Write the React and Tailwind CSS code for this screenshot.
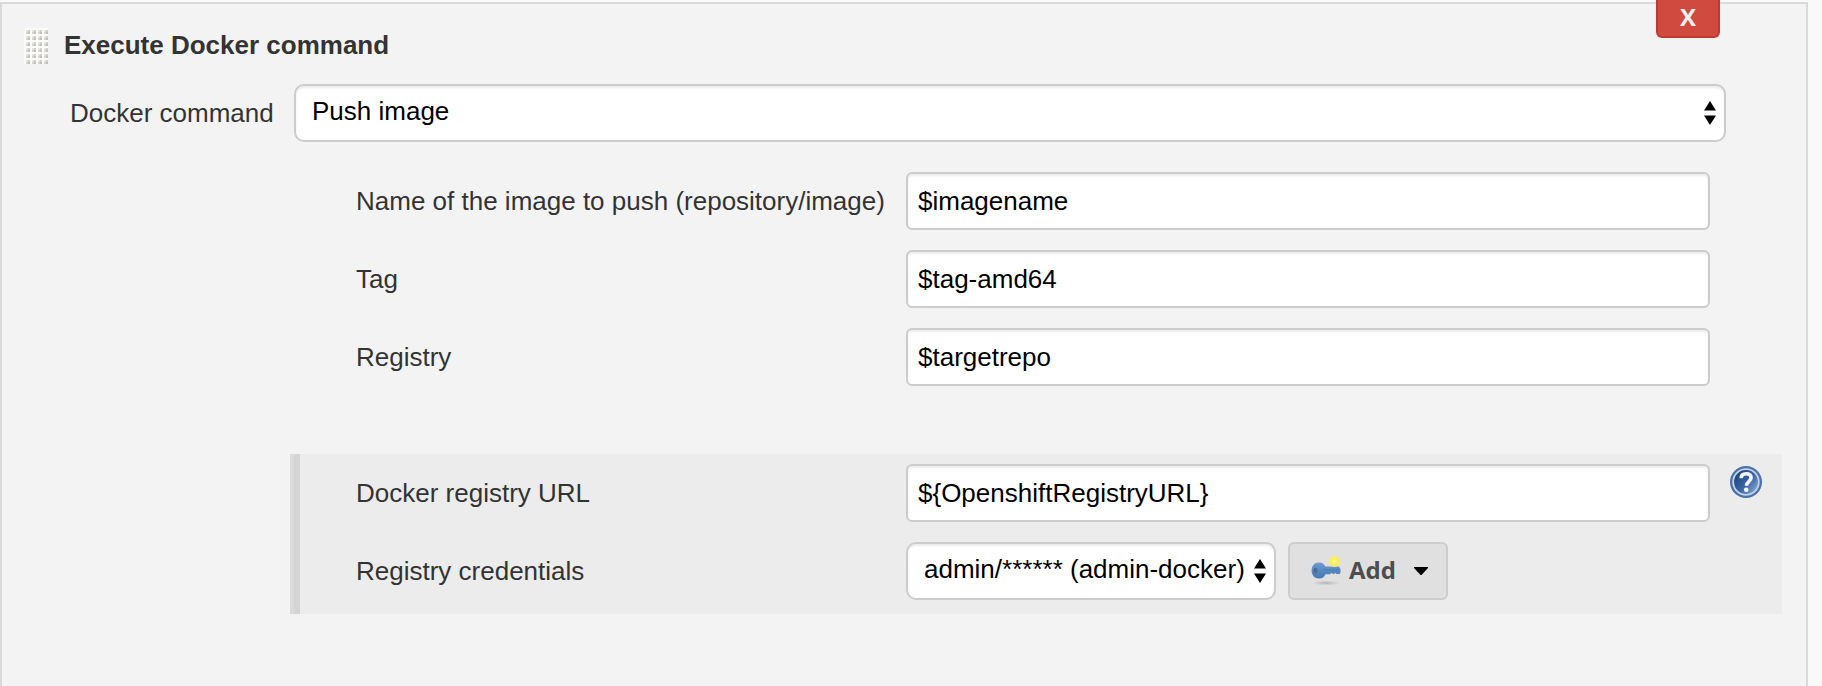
import React, { useId } from "react";

const controlBase =
  "h-[58px] border-2 border-[#ccc] bg-white text-[26px] text-black shadow-[inset_0_2px_2px_rgba(0,0,0,0.075)] outline-none";

function Grip() {
  return (
    <svg className="h-9 w-6 shrink-0" viewBox="0 0 24 36" aria-hidden="true">
      <defs>
        <pattern id="grip-dots" width="6" height="6" patternUnits="userSpaceOnUse">
          <rect width="6" height="6" fill="#fbfbfa" />
          <rect x="2" y="2" width="4" height="4" fill="#e9e8e6" />
          <rect x="3" y="3" width="3" height="3" fill="#d8d6d3" />
          <rect x="4" y="2" width="2" height="2" fill="#d2d0cd" />
          <rect x="2" y="4" width="2" height="2" fill="#d8d6d3" />
          <rect x="4" y="4" width="2" height="2" fill="#c2c0bc" />
        </pattern>
      </defs>
      <rect width="24" height="36" fill="url(#grip-dots)" />
    </svg>
  );
}

function UpDown() {
  return (
    <svg
      className="pointer-events-none absolute top-[17px] right-2 h-6 w-4"
      viewBox="0 0 16 24"
      aria-hidden="true"
    >
      <path d="M8 0 14 9.5H2ZM8 24 14 14.5H2Z" fill="#000" />
    </svg>
  );
}

function Select({ id, value, className }) {
  return (
    <div className={"relative " + className}>
      <select
        id={id}
        defaultValue={value}
        className={controlBase + " w-full appearance-none rounded-[10px] pr-6 pb-1 pl-4"}
      >
        <option>{value}</option>
      </select>
      <UpDown />
    </div>
  );
}

function Field({ label, value, help }) {
  const id = useId();
  return (
    <Row label={label} id={id} help={help}>
      <input
        id={id}
        type="text"
        defaultValue={value}
        className={controlBase + " w-full rounded-md px-[10px]"}
      />
    </Row>
  );
}

function Row({ label, id, help, children }) {
  return (
    <div className="flex items-center">
      <label htmlFor={id} className="w-[550px] shrink-0">
        {label}
      </label>
      <div className="flex min-w-0 flex-1 gap-3">{children}</div>
      <div className="flex h-[58px] w-[72px] shrink-0 justify-start pt-[2px] pl-5">{help}</div>
    </div>
  );
}

function HelpIcon() {
  return (
    <svg className="size-8" viewBox="0 0 32 32" aria-hidden="true">
      <defs>
        <linearGradient id="help-fill" x1="0.1" y1="0.2" x2="0.9" y2="0.9">
          <stop offset="0" stopColor="#1d4583" />
          <stop offset="0.5" stopColor="#3864a2" />
          <stop offset="1" stopColor="#86a7d2" />
        </linearGradient>
      </defs>
      <circle cx="16" cy="16" r="16" fill="#4a72ab" />
      <circle cx="16" cy="16" r="12.8" fill="url(#help-fill)" stroke="#c3d2e6" strokeWidth="1.8" />
      <path
        d="M11.2 12.2C11.2 9.2 13.3 7.8 16.1 7.8c3 0 5 1.5 5 4 0 3.7-4.700 3.900-4.700 7.900"
        fill="none"
        stroke="#f4f7fb"
        strokeWidth="3.6"
      />
      <circle cx="16.2" cy="23.8" r="2.3" fill="#f4f7fb" />
    </svg>
  );
}

function KeyIcon() {
  return (
    <svg className="size-8 shrink-0" viewBox="0 0 32 32" aria-hidden="true">
      <defs>
        <radialGradient id="key-shadow">
          <stop offset="0" stopColor="#b4b4b4" />
          <stop offset="1" stopColor="#b4b4b4" stopOpacity="0" />
        </radialGradient>
        <radialGradient id="key-spark">
          <stop offset="0" stopColor="#fffbb0" />
          <stop offset="0.45" stopColor="#fbf04a" />
          <stop offset="0.8" stopColor="#f7ee62" stopOpacity="0.8" />
          <stop offset="1" stopColor="#f7ee62" stopOpacity="0" />
        </radialGradient>
        <linearGradient id="key-body" x1="0" y1="0" x2="0" y2="1">
          <stop offset="0" stopColor="#6c9bd0" />
          <stop offset="1" stopColor="#4677b4" />
        </linearGradient>
      </defs>
      <ellipse cx="16" cy="28" rx="14" ry="2.5" fill="url(#key-shadow)" />
      <path
        d="M9 7.5c3.2 0 5.2 1.500 6.200 4H29l1.500 2.500v3.500l-1 1.500h-3l-1.500-1-1.500 1.200-2-1.200-1.500 1.200h-4.500c-1 2.800-3.400 4.300-6.500 4.300C4.500 23.500 1.600 20 1.600 15.500S4.500 7.500 9 7.500Z"
        fill="url(#key-body)"
      />
      <path d="M14.5 14.8H29" stroke="#4b7ab5" strokeWidth="1" />
      <ellipse cx="5.5" cy="15.5" rx="2" ry="3" fill="#4b6d93" />
      <circle cx="24.5" cy="6.500" r="6.200" fill="url(#key-spark)" />
    </svg>
  );
}

export default function App() {
  return (
    <div className="flex min-h-screen flex-col bg-[#f9f9f9] pt-[2px] pr-[14px] font-['Liberation_Sans',Arial,sans-serif] text-[26px] leading-9 text-[#333]">
      <section className="relative flex-1 border-2 border-b-0 border-[#d9d9d9] bg-[#f3f3f3] pt-6 pr-6 pl-[22px]">
        <button
          type="button"
          aria-label="Delete step"
          className="absolute -top-1 right-[86px] flex h-[38px] w-16 items-center justify-center rounded-b-md border-2 border-t-0 border-[#bf3a30] bg-[#d14a3f] pb-[2px] font-['Open_Sans',sans-serif] text-2xl font-bold text-[#f0f0f0]"
        >
          X
        </button>

        <header className="flex items-center gap-4">
          <Grip />
          <h2 className="pb-[2px] leading-[34px] font-bold">Execute Docker command</h2>
        </header>

        <div className="mt-5 flex items-center pr-14">
          <label htmlFor="docker-command" className="w-[270px] shrink-0 pl-[46px]">
            Docker command
          </label>
          <Select id="docker-command" value="Push image" className="flex-1" />
        </div>

        <div className="mt-[30px] ml-[266px] flex flex-col gap-5 pl-[66px]">
          <Field label="Name of the image to push (repository/image)" value="$imagename" />
          <Field label="Tag" value="$tag-amd64" />
          <Field label="Registry" value="$targetrepo" />
        </div>

        <div className="mt-[68px] ml-[266px] border-l-4 border-[#dadada]">
          <div className="flex flex-col gap-5 border-l-[6px] border-[#d4d4d4] bg-[#ececec] pt-[10px] pb-[14px] pl-14">
            <Field
              label="Docker registry URL"
              value="${OpenshiftRegistryURL}"
              help={
                <a href="#help" aria-label="Help for Docker registry URL" className="size-8">
                  <HelpIcon />
                </a>
              }
            />
            <Row label="Registry credentials" id="credentials">
              <Select
                id="credentials"
                value="admin/****** (admin-docker)"
                className="w-[370px]"
              />
              <button
                type="button"
                className="flex h-[58px] w-40 items-center rounded-md border-2 border-[#ccc] bg-[#e0e0e0] pl-5 font-['Open_Sans',sans-serif] text-2xl font-bold text-[#4d4d4d]"
              >
                <KeyIcon />
                <span className="ml-[7px] pb-[2px]">Add</span>
                <svg className="ml-[18px] h-2 w-[14px]" viewBox="0 0 14 8" aria-hidden="true">
                  <path d="M0 0h14v1L7.5 8h-1L0 1Z" fill="#000" />
                </svg>
              </button>
            </Row>
          </div>
        </div>
      </section>
    </div>
  );
}
